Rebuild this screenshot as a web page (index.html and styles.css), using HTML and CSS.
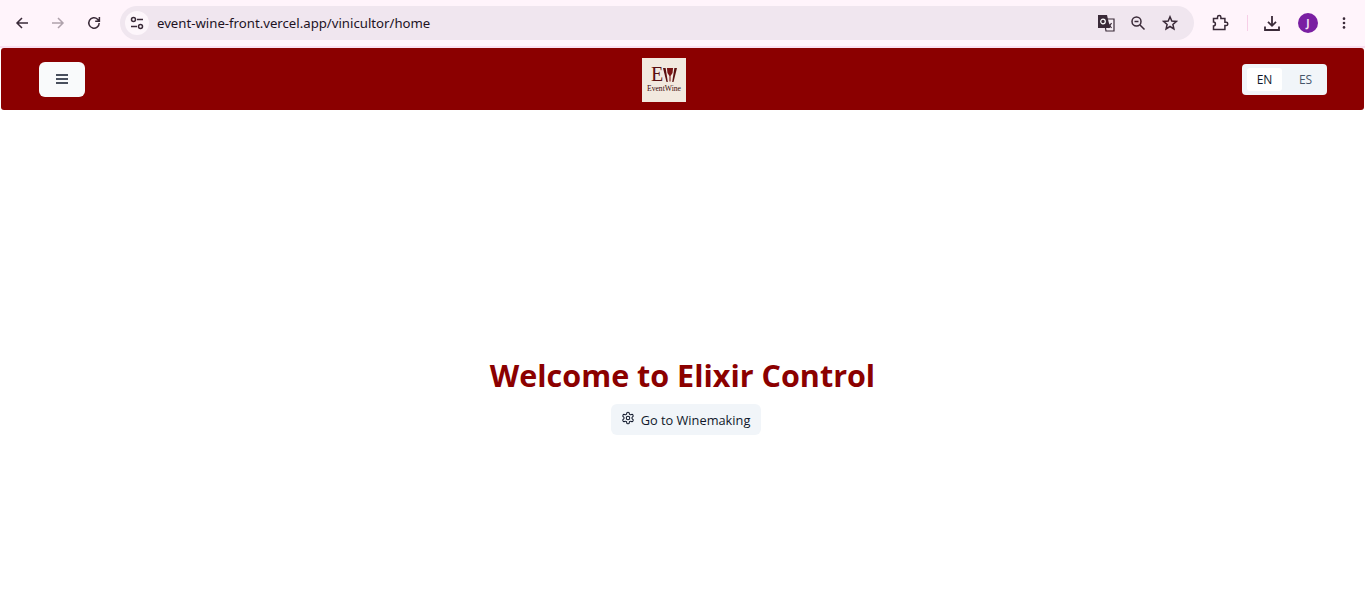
FILE: index.html
```html
<!DOCTYPE html>
<html lang="en">
<head>
<meta charset="utf-8">
<title>Elixir Control</title>
<link rel="stylesheet" href="styles.css">
</head>
<body>
<div class="chrome">
  <div class="nav">
    <svg class="ic" viewBox="0 0 16 16"><path d="M14 8H3M8 3 3 8l5 5" class="s"/></svg>
    <svg class="ic dim" viewBox="0 0 16 16"><path d="M2 8h11M8 3l5 5-5 5" class="s"/></svg>
    <svg class="ic" viewBox="0 0 16 16"><path d="M13.200 8a5.200 5.200 0 1 1-1.600-3.800L13.200 6M13.400 2v4.200H9.200" class="s"/></svg>
  </div>
  <div class="omnibox">
    <span class="tune">
      <svg viewBox="0 0 16 16" width="16" height="16"><circle cx="4.500" cy="4.500" r="2" class="s"/><path d="M8 4.500h6M2 11.500h6" class="s"/><circle cx="11.500" cy="11.500" r="2" class="s"/></svg>
    </span>
    <span class="url">event-wine-front.vercel.app/vinicultor/home</span>
    <span class="omni-icons">
      <svg class="ic" viewBox="0 0 18 18"><path d="M7 5h10v12H9z" fill="#f6eef5" stroke="#3a2a38" stroke-width="1.200"/><path d="M1 1h9l3 13H1z" fill="#3a2a38"/><circle cx="6" cy="7.500" r="2.300" fill="none" stroke="#fff" stroke-width="1.200"/><path d="m11 9 3.500 5M14.500 9 11.500 14" stroke="#3a2a38" stroke-width="1.200"/></svg>
      <svg class="ic" viewBox="0 0 16 16"><circle cx="6.500" cy="6.500" r="4.500" class="s"/><path d="M4.500 6.500h4M10 10l4.500 4.500" class="s"/></svg>
      <svg class="ic" viewBox="0 0 16 16"><path d="m8 1.800 1.800 4.200 4.500.4-3.400 3 1 4.500L8 11.500l-3.900 2.400 1-4.500-3.400-3 4.500-.4z" class="s"/></svg>
    </span>
  </div>
  <div class="actions">
    <svg class="ic" viewBox="0 0 18 18"><path d="M2.500 4.500h4V3.300a1.700 1.700 0 0 1 3.400 0v1.200h4v3.700h1.200a1.700 1.700 0 0 1 0 3.400h-1.200v4H2.500v-3.700a1.900 1.900 0 0 0 0-3.800z" class="s"/></svg>
    <span class="sep"></span>
    <svg class="ic" viewBox="0 0 18 18"><path d="M9 2v9.500M5 7.800l4 4 4-4M2 12.500V16h14v-3.500" class="s heavy"/></svg>
    <span class="avatar">J</span>
    <svg class="ic menu" viewBox="0 0 16 16"><circle cx="8" cy="3" r="1.500"/><circle cx="8" cy="8" r="1.500"/><circle cx="8" cy="13" r="1.500"/></svg>
  </div>
</div>
<header class="topbar">
  <button class="burger" aria-label="Menu">
    <svg viewBox="0 0 16 16" width="16" height="16"><path d="M2 4h12M2 8h12M2 12h12" stroke="#0f172a" stroke-width="1.300" fill="none"/></svg>
  </button>
  <div class="logo">
    <div class="mark">
      <span class="mark-e">E</span>
      <svg class="mark-w" viewBox="0 0 16 16" preserveAspectRatio="none"><path d="M0 1h3l2.500 14H4zM16 1h-3l-2.500 14H12z" fill="#5a1010"/><path d="M4.500 1h7l-.6 5L8.600 9v5.500H7.400V9L5.100 6z" fill="#7a1414"/></svg>
    </div>
    <span class="mark-name">EventWine</span>
  </div>
  <div class="lang">
    <span class="lang-btn active">EN</span>
    <span class="lang-btn">ES</span>
  </div>
</header>
<main class="main">
  <h1 class="title">Welcome to Elixir Control</h1>
  <button class="cta">
    <svg viewBox="0 0 24 24" width="14" height="14"><path d="M12.200 2h-.4a2 2 0 0 0-2 2v.2a2 2 0 0 1-1 1.700l-.4.300a2 2 0 0 1-2 0l-.200-.1a2 2 0 0 0-2.700.7l-.200.4a2 2 0 0 0 .7 2.700l.2.100a2 2 0 0 1 1 1.700v.6a2 2 0 0 1-1 1.700l-.2.100a2 2 0 0 0-.7 2.700l.2.400a2 2 0 0 0 2.700.7l.2-.1a2 2 0 0 1 2 0l.4.300a2 2 0 0 1 1 1.700v.2a2 2 0 0 0 2 2h.4a2 2 0 0 0 2-2v-.2a2 2 0 0 1 1-1.700l.4-.3a2 2 0 0 1 2 0l.2.100a2 2 0 0 0 2.700-.7l.2-.4a2 2 0 0 0-.7-2.700l-.2-.1a2 2 0 0 1-1-1.700v-.6a2 2 0 0 1 1-1.700l.2-.1a2 2 0 0 0 .7-2.700l-.2-.4a2 2 0 0 0-2.700-.7l-.2.100a2 2 0 0 1-2 0l-.4-.3a2 2 0 0 1-1-1.700V4a2 2 0 0 0-2-2z" fill="none" stroke="#0f172a" stroke-width="1.800"/><circle cx="12" cy="12" r="3" fill="none" stroke="#0f172a" stroke-width="1.800"/></svg>
    <span>Go to Winemaking</span>
  </button>
</main>
</body>
</html>
```

FILE: styles.css
```css
* { box-sizing: border-box; }
html, body { margin: 0; height: 100%; overflow: hidden; }
body { background: #fff; font-family: "Open Sans", "Noto Sans", sans-serif; color: #0f172a; height: 597px; display: flex; flex-direction: column; }

.s { fill: none; stroke: #3a2a38; stroke-width: 1.500; }
.heavy { stroke-width: 1.800; }

.chrome { height: 48px; flex: none; background: #fff4fb; border-bottom: 2px solid #f9dff0; display: flex; align-items: center; padding: 0 12px 0 14px; }
.nav { display: flex; gap: 20px; width: 106px; flex: none; }
.ic { width: 16px; height: 16px; flex: none; display: block; }
.dim { opacity: .4; }
.menu { fill: #3a2a38; width: 14px; }

.omnibox { width: 1074px; height: 34px; flex: none; background: #f0e6ef; border-radius: 17px; display: flex; align-items: center; padding: 0 16px 0 5px; }
.tune { width: 24px; height: 24px; border-radius: 50%; background: #fdf6fb; display: flex; align-items: center; justify-content: center; flex: none; }
.url { margin-left: 8px; font-family: "Noto Sans", sans-serif; font-size: 13.200px; color: #21121f; flex: 1; }
.omni-icons { display: flex; gap: 16px; align-items: center; }
.omni-icons .ic:first-child { width: 18px; height: 18px; margin-right: -1px; }

.actions { display: flex; align-items: center; margin-left: 17px; }
.actions .ic:first-child { width: 18px; height: 18px; }
.sep { width: 1px; height: 16px; background: #f7cfe7; margin: 0 15px 0 18px; }
.avatar { width: 20px; height: 20px; border-radius: 50%; background: #7a1fa2; color: #f3e5f5; font-size: 10px; font-weight: 700; display: flex; align-items: center; justify-content: center; margin: 0 19px 0 17px; }
.actions > svg:nth-of-type(2) { width: 18px; height: 18px; }

.topbar { flex: none; height: 62px; margin: 0 1px; background: #8b0000; border-radius: 3px; display: flex; align-items: center; justify-content: space-between; padding: 0 37px 0 38px; }
.burger { width: 46px; height: 35px; border: 0; padding: 0; border-radius: 6px; background: #f9fafb; display: flex; align-items: center; justify-content: center; }
.logo { width: 44px; height: 44px; background: #f2e9df; display: flex; flex-direction: column; align-items: center; padding-top: 8px; margin: 2px 0 0 1px; }
.mark { display: flex; align-items: center; height: 17px; }
.mark-e { font-family: "Liberation Serif", serif; font-size: 20px; line-height: 17px; color: #5a1010; }
.mark-w { width: 14px; height: 16px; flex: none; }
.mark-name { font-family: "Liberation Serif", serif; font-size: 7.600px; line-height: 8px; margin-top: 2px; color: #3a0a0a; white-space: nowrap; }

.lang { width: 85px; height: 31px; background: #f1f5f9; border-radius: 4px; display: flex; align-items: center; padding: 4px 0 4px 5px; }
.lang-btn { font-size: 12px; flex: 1; height: 23px; display: flex; align-items: center; justify-content: center; color: #475569; border-radius: 3px; padding-left: 2px; }
.lang-btn.active { background: #fff; color: #0f172a; flex: 0 0 35px; padding-left: 0; }

.main { flex: 1; display: flex; flex-direction: column; align-items: center; padding-top: 244px; }
.title { margin: 0; font-size: 30.500px; line-height: 42px; font-weight: 700; color: #8b0000; white-space: nowrap; }
.cta { margin: 8px 0 0 6px; width: 150px; height: 31px; border: 0; padding: 0; background: #f1f5f9; border-radius: 6px; display: flex; align-items: center; justify-content: center; gap: 6px; font-family: "Open Sans", "Noto Sans", sans-serif; font-size: 12.800px; color: #0f172a; }
.cta svg { margin-top: -4px; flex: none; }
```
